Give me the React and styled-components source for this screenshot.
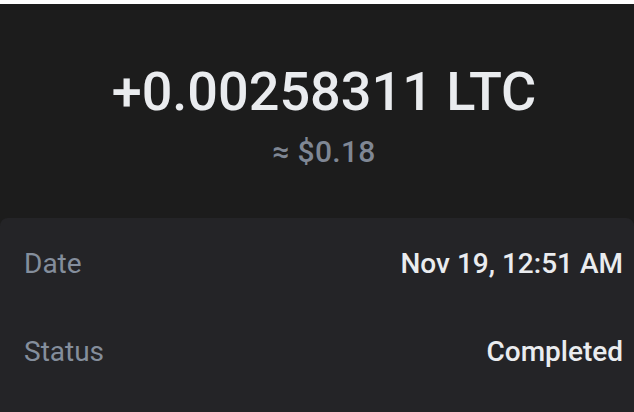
import React from "react";
import styled, { createGlobalStyle } from "styled-components";

const Global = createGlobalStyle`
  html, body { margin: 0; padding: 0; background: #ffffff; }
  body { font-family: Roboto, "Liberation Sans", sans-serif; }
  * { box-sizing: border-box; }
`;

const Page = styled.div`
  width: 634px;
  height: 412px;
  display: flex;
  flex-direction: column;
  background: #1c1c1c;
  border-top: 4px solid #ffffff;
  overflow: hidden;
`;

const Header = styled.header`
  height: 214px;
  display: flex;
  flex-direction: column;
  align-items: center;
  padding: 58px 0 0 14px;
  gap: 12px;
`;

const Amount = styled.div`
  font-size: 54px;
  line-height: 60px;
  font-weight: 500;
  color: #eaecef;
  letter-spacing: 0;
  white-space: nowrap;
`;

const Fiat = styled.div`
  font-size: 30px;
  line-height: 36px;
  font-weight: 500;
  color: #7f8794;
  letter-spacing: 0.3px;
  white-space: nowrap;
`;

const Card = styled.section`
  flex: 1;
  background: #242427;
  border-radius: 8px 8px 0 0;
  padding: 2px 11px 0 24px;
  display: flex;
  flex-direction: column;
`;

const Row = styled.div`
  height: 88px;
  display: flex;
  align-items: center;
  justify-content: space-between;
  line-height: 88px;
`;

const Label = styled.span`
  font-size: 28px;
  font-weight: 400;
  color: #848e9c;
`;

const Value = styled.span`
  font-size: 28px;
  font-weight: 500;
  color: #eaecef;
  letter-spacing: 0;
`;

const rows = [
  { label: "Date", value: "Nov 19, 12:51 AM" },
  { label: "Status", value: "Completed" },
];

export default function App() {
  return (
    <>
      <Global />
      <Page>
        <Header>
          <Amount>+0.00258311 LTC</Amount>
          <Fiat>≈ $0.18</Fiat>
        </Header>
        <Card>
          {rows.map((r) => (
            <Row key={r.label}>
              <Label>{r.label}</Label>
              <Value>{r.value}</Value>
            </Row>
          ))}
        </Card>
      </Page>
    </>
  );
}
